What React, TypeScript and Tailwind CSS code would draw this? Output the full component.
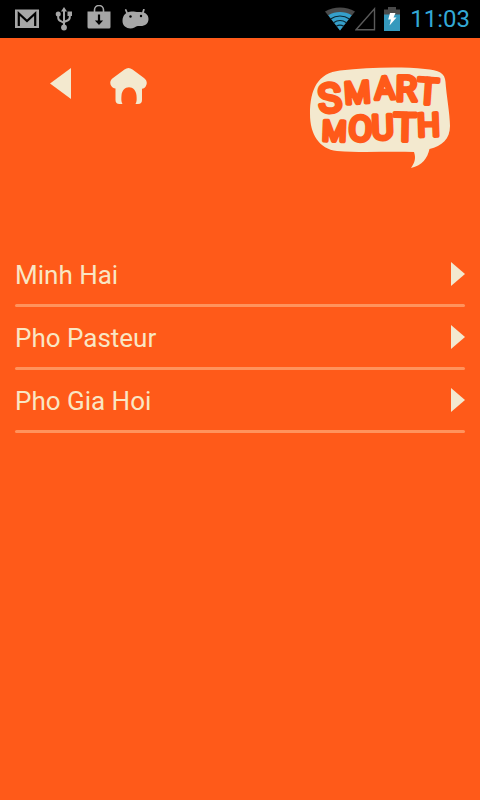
const restaurants = [
  { id: 'minh-hai', name: 'Minh Hai' },
  { id: 'pho-pasteur', name: 'Pho Pasteur' },
  { id: 'pho-gia-hoi', name: 'Pho Gia Hoi' },
];

// Hand-lettered look: every letter has its own size and tilt
const logoLetters = [
  { char: 'S', x: 31, y: 53, size: 40, tilt: -6 },
  { char: 'M', x: 58, y: 44, size: 30, tilt: -4 },
  { char: 'A', x: 85, y: 40, size: 31, tilt: -2 },
  { char: 'R', x: 106, y: 42, size: 35, tilt: 1 },
  { char: 'T', x: 127, y: 45, size: 36, tilt: 4 },
  { char: 'M', x: 34, y: 82, size: 28, tilt: 2 },
  { char: 'O', x: 60, y: 82, size: 35, tilt: 2 },
  { char: 'U', x: 83, y: 80, size: 34, tilt: -2 },
  { char: 'T', x: 105, y: 82, size: 39, tilt: 1 },
  { char: 'H', x: 129, y: 77, size: 32, tilt: -2 },
];

function StatusBar() {
  return (
    <div className="flex h-[38px] items-center justify-between bg-black pr-[10px] pl-[15px]">
      <div className="flex items-center gap-4 text-[#a6a6a6]">
        {/* Gmail */}
        <svg className="h-5 w-6" viewBox="0 0 24 20" fill="none">
          <path d="M0 .5h24v18.500H0z" fill="currentColor" />
          <path d="M3.800 17V4.500L12 12l8.200-7.500V17" stroke="#000" strokeWidth="2.200" />
        </svg>
        {/* USB */}
        <svg className="h-6 w-[18px]" viewBox="0 0 18 24" fill="none">
          <path d="M9 3v18M3.200 8v2.500q0 2.500 2.300 3.500L9 16M14.800 8v2q0 2.500-2.300 3.500L9 15" stroke="currentColor" strokeWidth="2" />
          <path d="M9 0l3 4.500H6z" fill="currentColor" />
          <path d="M12.500 4.500H17V9h-4.500z" fill="currentColor" />
          <circle cx="3.200" cy="7" r="2.500" fill="currentColor" />
          <circle cx="9" cy="20.500" r="2.900" fill="currentColor" />
        </svg>
        {/* Play store download */}
        <svg className="mb-1 -ml-[2px] h-6 w-6" viewBox="0 0 24 24" fill="none">
          <path d="M7.500 7V5a4.500 4.500 0 0 1 9 0v2" stroke="currentColor" strokeWidth="1.600" />
          <path d="M.5 6.500h23V22q0 1.500-1.500 1.500H2Q.5 23.500.5 22z" fill="currentColor" />
          <path d="M10.900 9.500h2.200v6h3L12 20l-4.100-4.500h3z" fill="#000" />
        </svg>
        {/* Android bean */}
        <svg className="-ml-[5px] h-5 w-[27px]" viewBox="0 0 27 20" fill="none">
          <path d="M5.500 5L3.800 1M20.500 5l1.300-4.300" stroke="currentColor" strokeWidth="1.800" strokeLinecap="round" />
          <path
            d="M.5 12C.5 6 4.500 2.800 9.500 2.600c3-.1 5 .6 8 .4 5.500-.3 9 2.500 9 7 0 4.500-3.500 7.300-8.500 7.100-2.500-.1-3.500.2-5.500 1.400C7.500 21 .5 18.500.5 12z"
            fill="currentColor"
          />
          <circle cx="8.500" cy="7.500" r="1.200" fill="#000" />
          <circle cx="19" cy="7" r="1.200" fill="#000" />
        </svg>
      </div>

      <div className="flex items-center">
        {/* Wifi */}
        <svg className="h-6 w-[30px]" viewBox="0 0 30 24" fill="none">
          <path d="M0 4.500C9-.8 21-.8 30 4.500L15 23.500z" fill="#4a4a4a" />
          <path d="M3.300 8.200C10.500 4 19.500 4 26.700 8.200L15 23.500z" fill="#35a0cb" />
          <path
            d="M5.500 12c5.800-4 13.200-4 19 0M8.500 15.700c4-2.700 9-2.700 13 0M11.200 19.300c2.400-1.500 5.200-1.500 7.600 0"
            stroke="#0b2530"
            strokeWidth="1.100"
          />
        </svg>
        {/* Signal */}
        <svg className="h-6 w-[21px]" viewBox="0 0 21 24" fill="none">
          <path d="M1 22.800L19.500 1.800v21z" stroke="#5a5a5a" strokeWidth="1.400" />
        </svg>
        {/* Battery */}
        <svg className="ml-2 h-6 w-4" viewBox="0 0 16 24" fill="none">
          <path d="M4 0h8v2.500h4V9H0V2.500h4z" fill="#4a4a4a" />
          <path d="M0 7.500h16V24H0z" fill="#3599bd" />
          <path d="M6 6h5.500L9.500 10.500h3L5.500 18.500l1.500-6H4.200z" fill="#fff" />
        </svg>
        <span className="ml-[10px] text-2xl leading-6 text-[#33a9d6]">11:03</span>
      </div>
    </div>
  );
}

function Logo() {
  return (
    <svg className="h-[102px] w-[142px]" viewBox="9 7 142 102" role="img" aria-label="Smart Mouth">
      <path
        d="M40 11.500C68 8.500 100 7.500 125 10c14 1.300 20 4 20.500 13 .7 12 4.500 32 4.500 44 0 13-8 20-20.500 23-2 9-7 16.500-18.500 19 4-6 5-10 3-16-27-1-50 1-77-1C19 90 10 75 10 55 10 30 18 14 40 11.500z"
        fill="#f3e9cf"
      />
      <g
        fill="#ff5a19"
        stroke="#ff5a19"
        strokeWidth="4"
        strokeLinejoin="round"
        textAnchor="middle"
        className="font-['Roboto',sans-serif] font-normal"
      >
        {logoLetters.map((letter, i) => (
          <text
            key={i}
            x={letter.x}
            y={letter.y}
            fontSize={letter.size}
            transform={`rotate(${letter.tilt} ${letter.x} ${letter.y})`}
          >
            {letter.char}
          </text>
        ))}
      </g>
    </svg>
  );
}

function Header() {
  return (
    <header className="flex items-start justify-between pt-7 pr-[29px] pl-[50px]">
      <div className="flex items-start gap-[39px] text-[#f3e9cf]">
        <button type="button" aria-label="Back" className="cursor-pointer pt-px">
          <svg className="h-8 w-[21px]" viewBox="0 0 21 32" fill="currentColor">
            <path d="M21 1v31L0 16.500z" />
          </svg>
        </button>
        <button type="button" aria-label="Home" className="cursor-pointer pt-px">
          <svg className="h-[37px] w-[37px]" viewBox="0 0 37 37" fill="currentColor">
            <path d="M14.500 2.500q4-3 8 0L34 11c3 2.300 3.500 5.500 1.800 8.200-.8 1.500-2 2.300-3.800 2.500V33q0 4-4 4h-2.500c1.500-3 1.200-5 1-8.500-.3-5-3.500-8.300-7.500-8.300s-7.200 3.300-7.500 8.300c-.2 3.500-.5 5.500 1 8.500H9.500q-4 0-4-4V21.500c-2-.2-3.200-1-4.200-2.500C-.5 16 0 13.300 3 11z" />
          </svg>
        </button>
      </div>
      <Logo />
    </header>
  );
}

export default function App() {
  return (
    <div className="min-h-screen bg-[#ff5a19] font-['Roboto',sans-serif]">
      <StatusBar />
      <Header />
      <main className="px-[15px] pt-[76px]">
        <ul>
          {restaurants.map((item) => (
            <li key={item.id}>
              <a
                href={`#${item.id}`}
                className="flex h-[60px] items-center justify-between text-[26px] leading-8 text-[#f9e6c4]"
              >
                <span className="pt-[2px]">{item.name}</span>
                <svg className="h-6 w-[14px] text-[#f3e9cf]" viewBox="0 0 14 24" fill="currentColor">
                  <path d="M0 0l14 12L0 24z" />
                </svg>
              </a>
              <div className="h-[3px] rounded-full bg-[#ff935c]" />
            </li>
          ))}
        </ul>
      </main>
    </div>
  );
}
